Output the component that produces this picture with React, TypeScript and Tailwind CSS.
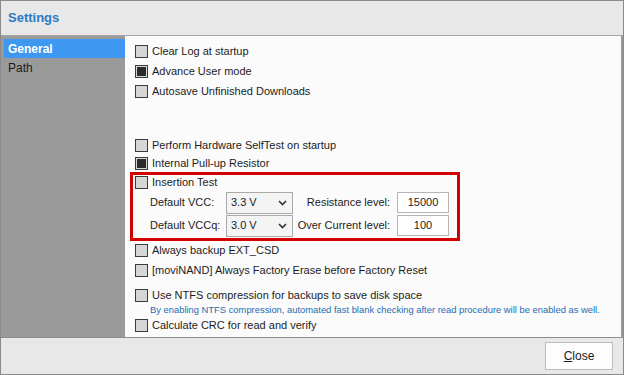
const font = { fontFamily: '"Liberation Sans", Arial, sans-serif' };

type Item = { label: string; checked?: boolean };

function Box({ checked }: { checked?: boolean }) {
  return (
    <span className="w-[13px] h-[13px] border border-[#3c3c3c] bg-[#d6d6d6] flex items-center justify-center shrink-0">
      {checked && <span className="w-[9px] h-[9px] bg-[#2b2b2b]" />}
    </span>
  );
}

function Check({ label, checked, h = 'h-[20px]' }: Item & { h?: string }) {
  return (
    <div className={`flex items-center gap-[4px] shrink-0 ${h}`}>
      <Box checked={checked} />
      <span className="text-[11px] text-[#1b1b1b] whitespace-nowrap">{label}</span>
    </div>
  );
}

function Select({ value }: { value: string }) {
  return (
    <div className="w-[67px] h-[22px] shrink-0 border border-[#a9a9a9] bg-[#f4f4f4] flex items-center justify-between pl-[4px] pr-[5px]">
      <span className="text-[11px] text-[#1b1b1b]">{value}</span>
      <svg width="9" height="6" viewBox="0 0 9 6">
        <path d="M1 1l3.5 3.5L8 1" stroke="#333" strokeWidth="1.6" fill="none" />
      </svg>
    </div>
  );
}

function Input({ value }: { value: string }) {
  return (
    <div className="w-[52px] h-[21px] shrink-0 border border-[#b5b5b5] bg-white flex items-center justify-center text-[11px] text-[#1b1b1b]">
      {value}
    </div>
  );
}

export default function App() {
  return (
    <div style={font} className="w-[624px] h-[375px] border border-[#8a8a8a] bg-[#e8e8e8] flex flex-col overflow-hidden">
      {/* title */}
      <div className="h-[35px] shrink-0 flex items-center px-[7px] border-b border-[#a5a5a5]">
        <span className="text-[13px] font-bold text-[#2b7bc4]">Settings</span>
      </div>

      <div className="h-[302px] shrink-0 flex bg-[#9a9a9a] border-b border-[#8e8e8e]">
        {/* sidebar */}
        <div className="w-[124px] shrink-0 pt-[3px] pl-[3px]">
          <div className="h-[19px] bg-[#3e97f0] flex items-center pl-[4px] text-[12px] font-bold text-white">General</div>
          <div className="h-[19px] flex items-center pl-[4px] text-[12px] text-[#1b1b1b]">Path</div>
        </div>

        {/* options panel */}
        <div className="flex-1 min-w-0 mr-[2px] bg-[#fbfbfb] flex flex-col pl-[10px] pt-[5px]">
          <Check label="Clear Log at startup" />
          <Check label="Advance User mode" checked />
          <Check label="Autosave Unfinished Downloads" />
          <div className="h-[35px] shrink-0" />
          <Check label="Perform Hardware SelfTest on startup" h="h-[18px]" />
          <Check label="Internal Pull-up Resistor" checked h="h-[18px]" />

          <div className="w-[330px] h-[69px] shrink-0 -ml-[5px] border-[3px] border-[#d40000] pl-[2px] flex flex-col">
            <Check label="Insertion Test" h="h-[15px]" />
            <div className="flex items-center h-[23px] mt-[1px]">
              <span className="w-[91px] shrink-0 pl-[15px] text-[11px] text-[#1b1b1b] whitespace-nowrap">Default VCC:</span>
              <Select value="3.3 V" />
              <span className="w-[104px] shrink-0 text-right pr-[7px] text-[11px] text-[#1b1b1b] whitespace-nowrap">Resistance level:</span>
              <Input value="15000" />
            </div>
            <div className="flex items-center h-[23px]">
              <span className="w-[91px] shrink-0 pl-[15px] text-[11px] text-[#1b1b1b] whitespace-nowrap">Default VCCq:</span>
              <Select value="3.0 V" />
              <span className="w-[104px] shrink-0 text-right pr-[7px] text-[11px] text-[#1b1b1b] whitespace-nowrap">Over Current level:</span>
              <Input value="100" />
            </div>
          </div>

          <Check label="Always backup EXT_CSD" h="h-[18px]" />
          <div className="h-[2px] shrink-0" />
          <Check label="[moviNAND] Always Factory Erase before Factory Reset" h="h-[18px]" />
          <div className="h-[8px] shrink-0" />
          <Check label="Use NTFS compression for backups to save disk space" h="h-[17px]" />
          <div className="h-[12px] shrink-0 flex items-center pl-[15px] text-[9.4px] text-[#1d6db3] whitespace-nowrap">
            By enabling NTFS compression, automated fast blank checking after read procedure will be enabled as well.
          </div>
          <Check label="Calculate CRC for read and verify" h="h-[18px]" />
        </div>
      </div>

      {/* footer */}
      <div className="flex-1 flex items-center justify-end pr-[10px]">
        <button className="w-[68px] h-[28px] border border-[#bdbdbd] bg-[#fdfdfd] text-[12px] text-[#1b1b1b]">
          <span className="underline">C</span>lose
        </button>
      </div>
    </div>
  );
}
